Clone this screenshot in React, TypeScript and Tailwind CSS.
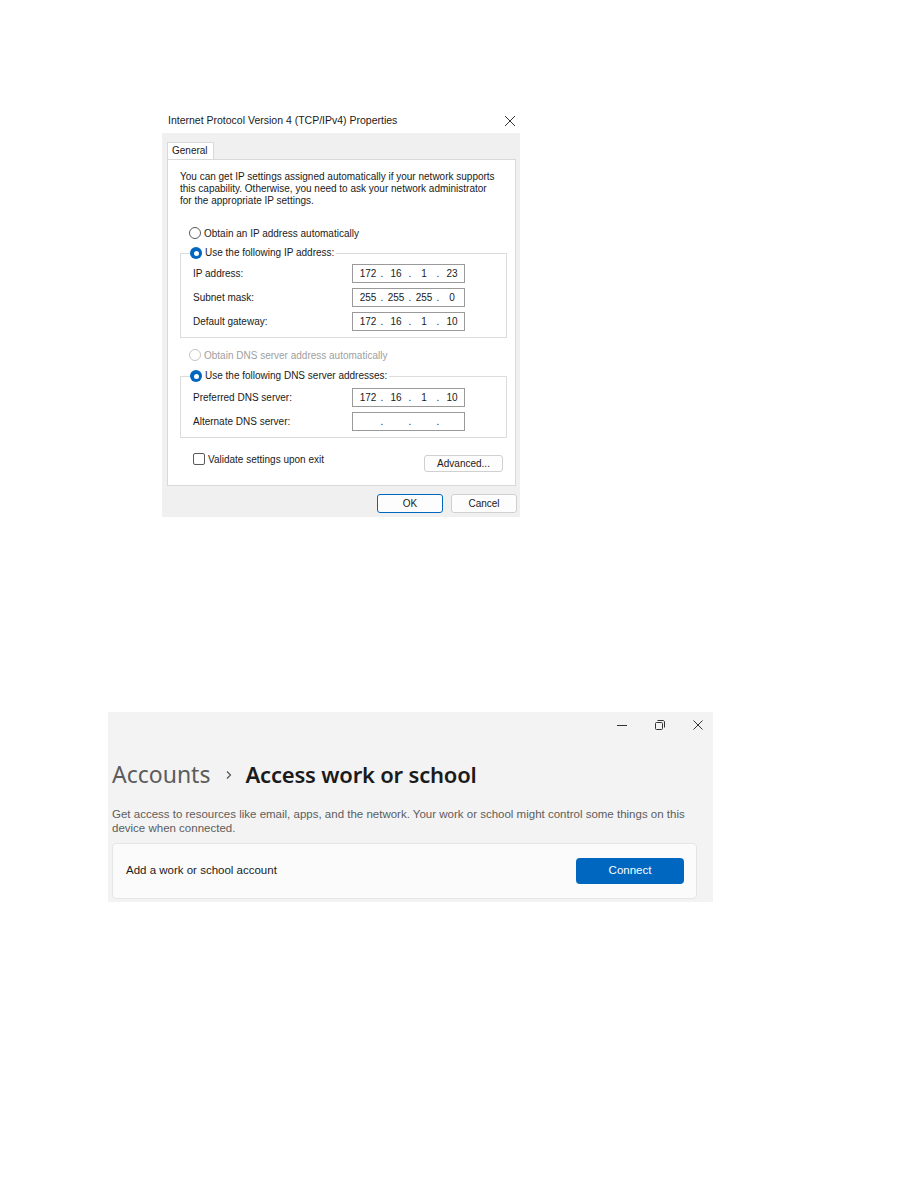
import { ReactNode } from "react";

const dlgFont = { fontFamily: '"Liberation Sans", Arial, sans-serif' };
const winFont = { fontFamily: '"Noto Sans", "Open Sans", sans-serif' };

const Radio = ({ checked, disabled }: { checked?: boolean; disabled?: boolean }) => {
  if (checked) {
    return (
      <span className="w-[12px] h-[12px] rounded-full bg-[#0067c0] flex items-center justify-center shrink-0">
        <span className="w-[5px] h-[5px] rounded-full bg-white" />
      </span>
    );
  }
  return (
    <span
      className={
        disabled
          ? "w-[12px] h-[12px] rounded-full border border-[#c4c4c4] bg-white shrink-0"
          : "w-[12px] h-[12px] rounded-full border border-[#5a5a5a] bg-white shrink-0"
      }
    />
  );
};

const IpBox = ({ parts }: { parts: string[] }) => (
  <div className="w-[113px] h-[19px] border border-[#9a9a9a] bg-white flex items-center pl-[4px]">
    {parts.map((p, i) => (
      <div key={i} className="flex items-center">
        {i > 0 && <span className="w-[6px] text-center">.</span>}
        <span className="w-[22px] text-center">{p}</span>
      </div>
    ))}
  </div>
);

const Row = ({ label, children }: { label: string; children: ReactNode }) => (
  <div className="flex items-center justify-between h-[19px] pr-[41px]">
    <span>{label}</span>
    {children}
  </div>
);

const Legend = ({ children }: { children: ReactNode }) => (
  <legend className="ml-[-3px] pr-[2px] h-[12px]">
    <label className="flex items-center gap-[3px] leading-[12px]">
      <Radio checked />
      {children}
    </label>
  </legend>
);

const IpDialog = () => (
  <div className="ml-[162px] pt-[105px] w-[358px] text-[10px] text-[#1a1a1a]" style={dlgFont}>
    <div className="h-[28px] flex items-center justify-between pl-[6px] pr-[4px] pt-[3px]">
      <span className="text-[10.5px]">Internet Protocol Version 4 (TCP/IPv4) Properties</span>
      <svg width="12" height="12" viewBox="0 0 12 12">
        <path d="M1 1L11 11M11 1L1 11" stroke="#333" strokeWidth="1" />
      </svg>
    </div>
    <div className="bg-[#f0f0f0] h-[384px] pt-[9px] pl-[5px] pr-[4px]">
      <div className="w-[47px] h-[17px] bg-white border border-b-0 border-[#d9d9d9] pl-[4px] leading-[16px]">
        General
      </div>
      <div className="bg-white border border-[#d9d9d9] h-[327px] px-[12px] pt-[11px]">
        <p className="leading-[12px]">
          You can get IP settings assigned automatically if your network supports
          <br />
          this capability. Otherwise, you need to ask your network administrator
          <br />
          for the appropriate IP settings.
        </p>
        <label className="flex items-center gap-[3px] mt-[20px] ml-[9px] h-[12px]">
          <Radio />
          Obtain an IP address automatically
        </label>
        <fieldset className="mt-[8px] w-[327px] border border-[#dcdcdc] pl-[12px] pt-[5px] pb-[6px] flex flex-col gap-[5px]">
          <Legend>Use the following IP address:</Legend>
          <Row label="IP address:">
            <IpBox parts={["172", "16", "1", "23"]} />
          </Row>
          <Row label="Subnet mask:">
            <IpBox parts={["255", "255", "255", "0"]} />
          </Row>
          <Row label="Default gateway:">
            <IpBox parts={["172", "16", "1", "10"]} />
          </Row>
        </fieldset>
        <label className="flex items-center gap-[3px] mt-[11px] ml-[9px] h-[12px] text-[#a0a0a0]">
          <Radio disabled />
          Obtain DNS server address automatically
        </label>
        <fieldset className="mt-[9px] w-[327px] border border-[#dcdcdc] pl-[12px] pt-[6px] pb-[6px] flex flex-col gap-[5px]">
          <Legend>Use the following DNS server addresses:</Legend>
          <Row label="Preferred DNS server:">
            <IpBox parts={["172", "16", "1", "10"]} />
          </Row>
          <Row label="Alternate DNS server:">
            <IpBox parts={["", "", "", ""]} />
          </Row>
        </fieldset>
        <div className="flex items-start justify-between mt-[15px] pl-[13px]">
          <label className="flex items-center gap-[3px] h-[12px]">
            <span className="w-[12px] h-[12px] border border-[#5a5a5a] rounded-[2px] bg-white" />
            Validate settings upon exit
          </label>
          <button className="mt-[2px] w-[79px] h-[17px] bg-[#fdfdfd] border border-[#d0d0d0] rounded-[3px] leading-[15px]">
            Advanced...
          </button>
        </div>
      </div>
      <div className="flex justify-end gap-[8px] mt-[8px] mr-[-1px]">
        <button className="w-[66px] h-[19px] bg-[#fdfdfd] border border-[#0067c0] rounded-[3px] leading-[17px]">
          OK
        </button>
        <button className="w-[66px] h-[19px] bg-[#fdfdfd] border border-[#d0d0d0] rounded-[3px] leading-[17px]">
          Cancel
        </button>
      </div>
    </div>
  </div>
);

const SettingsWindow = () => (
  <div className="ml-[108px] mt-[195px] w-[605px] h-[190px] bg-[#f3f3f3] pl-[4px] pr-[16px]" style={winFont}>
    <div className="h-[26px] flex items-center justify-end gap-[28px] mr-[-6px]">
      <svg width="10" height="10" viewBox="0 0 10 10">
        <path d="M0 5.5H10" stroke="#333" strokeWidth="1" />
      </svg>
      <svg width="10" height="10" viewBox="0 0 10 10">
        <rect x="0.5" y="2.5" width="7" height="7" rx="1" fill="none" stroke="#333" strokeWidth="1" />
        <path d="M2.5 0.5H8C8.8 0.5 9.5 1.2 9.5 2V7.5" fill="none" stroke="#333" strokeWidth="1" />
      </svg>
      <svg width="10" height="10" viewBox="0 0 10 10">
        <path d="M0.5 0.5L9.5 9.5M9.5 0.5L0.5 9.5" stroke="#333" strokeWidth="1" />
      </svg>
    </div>
    <div className="mt-[20px] h-[32px] flex items-center">
      <span className="text-[#5c5c5c] text-[23px]">Accounts</span>
      <svg width="8" height="10" viewBox="0 0 8 10" className="ml-[15px] mr-[12px] mt-[2px]">
        <path d="M2 1.5L5.5 5L2 8.5" fill="none" stroke="#555" strokeWidth="1.2" />
      </svg>
      <span className="text-[#1b1b1b] text-[22px] font-semibold tracking-[-0.2px]">Access work or school</span>
    </div>
    <p className="mt-[17px] text-[11.5px] leading-[14px] text-[#5d5d5d]" style={dlgFont}>
      Get access to resources like email, apps, and the network. Your work or school might control some things on this
      <br />
      device when connected.
    </p>
    <div className="mt-[8px] w-[585px] h-[56px] bg-[#fbfbfb] border border-[#e5e5e5] rounded-[4px] flex items-center justify-between pl-[13px] pr-[12px]">
      <span className="text-[11.5px] text-[#1b1b1b]" style={dlgFont}>Add a work or school account</span>
      <button className="w-[108px] h-[26px] bg-[#0067c0] rounded-[4px] text-white text-[11.5px]" style={dlgFont}>
        Connect
      </button>
    </div>
  </div>
);

export default function App() {
  return (
    <div className="w-[918px] min-h-[1188px] bg-white overflow-hidden">
      <IpDialog />
      <SettingsWindow />
    </div>
  );
}
